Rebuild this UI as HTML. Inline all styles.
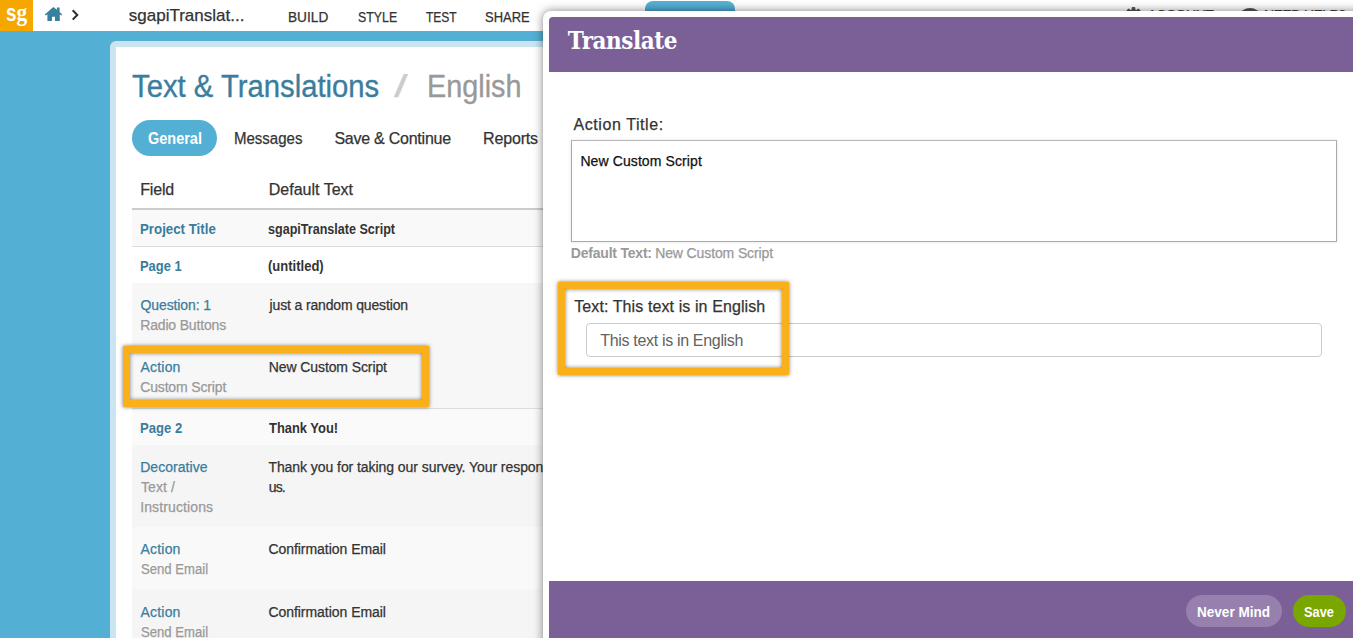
<!DOCTYPE html>
<html lang="en">
<head>
<meta charset="utf-8">
<title>Text &amp; Translations</title>
<style>
*{box-sizing:border-box;margin:0;padding:0}
html,body{width:1353px;height:638px;overflow:hidden}
body{background:#53b0d4;font-family:"Liberation Sans",sans-serif;color:#333;position:relative}
.t{position:absolute;white-space:nowrap;line-height:20px;font-size:14px;-webkit-text-stroke-width:.25px}
.t.b{-webkit-text-stroke-width:0}
.abs{position:absolute}
/* top bar */
#topbar{position:absolute;left:0;top:0;width:1353px;height:31px;background:#fff}
#logo{position:absolute;left:0;top:0;width:33px;height:31px;background:#f5a700}
#tab{position:absolute;left:645px;top:1px;width:90px;height:30px;border-radius:8px 8px 0 0;background:linear-gradient(#57b4d8,#3f97bb)}
/* panel */
#panel{position:absolute;left:110px;top:41px;width:1300px;height:700px;background:#fff;border:6px solid #c8e5f0;border-radius:6px}
.pill{position:absolute;left:132px;top:120px;width:85px;height:36px;border-radius:18px;background:#53b0d4}
.row{position:absolute;left:132px;width:1200px}
.blue{color:#3a7d9d}
.gray{color:#999}
.b{font-weight:bold}
/* highlight */
.hl{position:absolute;border:7px solid #f9b01b;box-shadow:0 0 4px rgba(0,0,0,.55),inset 0 0 4px rgba(0,0,0,.55)}
/* modal */
#modal{position:absolute;left:543px;top:11px;width:900px;height:700px;background:#fff;border-radius:8px;box-shadow:0 0 10px rgba(0,0,0,.5)}
#mhead{position:absolute;left:549px;top:17px;width:900px;height:55px;background:#7b5f97;border-radius:4px 0 0 0}
#mfoot{position:absolute;left:549px;top:581px;width:900px;height:80px;background:#7b5f97}
#ta{position:absolute;left:571px;top:140px;width:766px;height:102px;border:1px solid #aaa;border-top-color:#b8b8b8;background:#fff;box-shadow:0 0 3px rgba(0,0,0,.12)}
#inp{position:absolute;left:586px;top:323px;width:736px;height:34px;border:1px solid #ccc;border-radius:4px;background:#fff}
.btn{position:absolute;top:595px;height:32px;border-radius:16px}
</style>
</head>
<body>
<div id="topbar"></div>
<div id="logo"></div>
<span class="t b" id="sg" style="left:5.5px;top:0px;font-size:23px;line-height:26px;color:#fff;transform:scaleX(.82);transform-origin:0 0">s<span style="font-family:'Liberation Serif',serif;font-weight:bold;font-size:26px;margin-left:0px">g</span></span>
<svg class="abs" id="home" style="left:40px;top:0" width="45" height="31" viewBox="40 0 45 31"><path d="M53.3 7.1 L44.8 14.4 L45.8 15.6 L47.4 14.3 V21 H52 V16.8 H55 V21 H59.8 V14.3 L61.4 15.6 L62.3 14.4 L59.6 12 V7.6 H56.9 V9.8 Z" fill="#37819e"/><path d="M72.7 10.3 L77.3 14.95 L72.7 19.6" fill="none" stroke="#2e2e2e" stroke-width="2"/></svg>
<span class="t" id="ptitle" style="left:128.8px;top:4.2px;font-size:17px;line-height:24px;letter-spacing:-0.00px">sgapiTranslat...</span>
<span class="t" id="n1" style="left:288.0px;top:7px;transform:scaleX(0.976);transform-origin:0 0">BUILD</span>
<span class="t" id="n2" style="left:357.5px;top:7px;transform:scaleX(0.882);transform-origin:0 0">STYLE</span>
<span class="t" id="n3" style="left:425.9px;top:7px;transform:scaleX(0.857);transform-origin:0 0">TEST</span>
<span class="t" id="n4" style="left:485.0px;top:7px;transform:scaleX(0.925);transform-origin:0 0">SHARE</span>
<div id="tab"></div>
<svg class="abs" id="tricons" style="left:1120px;top:0" width="150" height="31" viewBox="1120 0 150 31"><g fill="#555"><circle cx="1133.5" cy="15.5" r="6.2"/><rect x="1131.7" y="7" width="3.6" height="17" rx="1"/><rect x="1125" y="13.7" width="17" height="3.6" rx="1"/><rect x="1131.7" y="7" width="3.6" height="17" rx="1" transform="rotate(45 1133.5 15.5)"/><rect x="1131.7" y="7" width="3.6" height="17" rx="1" transform="rotate(-45 1133.5 15.5)"/><ellipse cx="1250" cy="16" rx="10" ry="8"/></g><circle cx="1133.5" cy="15.5" r="2.6" fill="#fff"/></svg>
<span class="t" id="acc" style="left:1147.5px;top:4.6px;color:#444;letter-spacing:-0.5px">ACCOUNT</span>
<span class="t" id="help" style="left:1264px;top:4.6px;color:#444;letter-spacing:-0.56px">NEED HELP?</span>

<div id="panel"></div>
<span class="t blue" id="h1a" style="left:132.0px;top:67px;font-size:31px;line-height:40px;-webkit-text-stroke:0.35px #3a7d9d;transform:scaleX(0.944);transform-origin:0 0">Text &amp; Translations</span>
<span class="t" id="h1b" style="left:394px;top:67px;font-size:31px;line-height:40px;color:#ccc;transform:scaleX(1.6);transform-origin:0 0">/</span>
<span class="t" id="h1c" style="left:426.6px;top:67px;font-size:31px;line-height:40px;color:#999;-webkit-text-stroke:0.35px #999;transform:scaleX(0.929);transform-origin:0 0">English</span>
<div class="pill"></div>
<span class="t b" id="s1" style="left:147.5px;top:128.8px;font-size:16px;color:#fff;transform:scaleX(0.905);transform-origin:0 0">General</span>
<span class="t" id="s2" style="left:233.6px;top:128.8px;font-size:16px;transform:scaleX(0.938);transform-origin:0 0">Messages</span>
<span class="t" id="s3" style="left:334.4px;top:128.8px;font-size:16px;letter-spacing:-0.24px">Save &amp; Continue</span>
<span class="t" id="s4" style="left:483.0px;top:128.8px;font-size:16px;letter-spacing:-0.15px">Reports</span>

<span class="t" id="th1" style="left:140.2px;top:180px;font-size:16px;letter-spacing:-0.17px">Field</span>
<span class="t" id="th2" style="left:268.8px;top:180px;font-size:16px;letter-spacing:0.00px">Default Text</span>
<div class="row" style="top:208px;height:2px;background:#ccc"></div>
<div class="row" style="top:210px;height:36px;background:#f9f9f9"></div>
<div class="row" style="top:246px;height:1px;background:#ddd"></div>
<div class="row" style="top:283px;height:62px;background:#f7f7f7"></div>
<div class="row" style="top:345px;height:63px;background:#f7f7f7"></div>
<div class="row" style="top:408px;height:1px;background:#ddd"></div>
<div class="row" style="top:409px;height:36px;background:#fafafa"></div>
<div class="row" style="top:445px;height:82px;background:#f5f5f5"></div>
<div class="row" style="top:527px;height:62px;background:#f9f9f9"></div>
<div class="row" style="top:589px;height:62px;background:#f5f5f5"></div>

<span class="t b blue" id="r1a" style="left:140.0px;top:219px;transform:scaleX(0.949);transform-origin:0 0">Project Title</span>
<span class="t b" id="r1b" style="left:268.4px;top:219px;transform:scaleX(0.897);transform-origin:0 0">sgapiTranslate Script</span>
<span class="t b blue" id="r2a" style="left:139.9px;top:256px;transform:scaleX(0.923);transform-origin:0 0">Page 1</span>
<span class="t b" id="r2b" style="left:268.3px;top:256px;transform:scaleX(0.93);transform-origin:0 0">(untitled)</span>
<span class="t blue" id="r3a" style="left:140.6px;top:295px;letter-spacing:-0.12px">Question: 1</span>
<span class="t gray" id="r3c" style="left:140.2px;top:315px;letter-spacing:-0.16px">Radio Buttons</span>
<span class="t" id="r3b" style="left:269.6px;top:295px;letter-spacing:-0.15px">just a random question</span>
<span class="t blue" id="r4a" style="left:140.5px;top:357px;letter-spacing:0.2px">Action</span>
<span class="t gray" id="r4c" style="left:140.2px;top:377px;letter-spacing:-0.15px">Custom Script</span>
<span class="t" id="r4b" style="left:268.8px;top:357px;letter-spacing:-0.10px">New Custom Script</span>
<span class="t b blue" id="r5a" style="left:139.9px;top:418px;transform:scaleX(0.934);transform-origin:0 0">Page 2</span>
<span class="t b" id="r5b" style="left:268.9px;top:418px;transform:scaleX(0.922);transform-origin:0 0">Thank You!</span>
<span class="t blue" id="r6a" style="left:140.2px;top:457px;letter-spacing:0.05px">Decorative</span>
<span class="t gray" id="r6c" style="left:141.0px;top:477px;letter-spacing:0.08px">Text /</span>
<span class="t gray" id="r6d" style="left:140.2px;top:497px;letter-spacing:0.12px">Instructions</span>
<span class="t" id="r6b" style="left:268.4px;top:457px;letter-spacing:-0.06px">Thank you for taking our survey. Your response is very important to</span>
<span class="t" id="r6e" style="left:268.8px;top:477px;letter-spacing:-0.90px">us.</span>
<span class="t blue" id="r7a" style="left:140.5px;top:539px;letter-spacing:0.2px">Action</span>
<span class="t gray" id="r7c" style="left:140.5px;top:559px;transform:scaleX(0.937);transform-origin:0 0">Send Email</span>
<span class="t" id="r7b" style="left:268.4px;top:539px;letter-spacing:-0.04px">Confirmation Email</span>
<span class="t blue" id="r8a" style="left:140.5px;top:602px;letter-spacing:0.2px">Action</span>
<span class="t gray" id="r8c" style="left:140.5px;top:622px;transform:scaleX(0.937);transform-origin:0 0">Send Email</span>
<span class="t" id="r8b" style="left:268.4px;top:602px;letter-spacing:-0.04px">Confirmation Email</span>
<div class="hl" style="left:123px;top:346px;width:306px;height:61px"></div>

<div id="modal"></div>
<div id="mhead"></div>
<span class="t b" id="mt" style="left:567.8px;top:24.7px;font-size:24px;line-height:32px;color:#fff;font-family:'DejaVu Serif Condensed','DejaVu Serif',serif;letter-spacing:-0.46px">Translate</span>
<span class="t" id="l1" style="left:573.5px;top:114.5px;font-size:16px;letter-spacing:0.58px">Action Title:</span>
<div id="ta"></div>
<span class="t" id="tav" style="left:580.4px;top:151px;color:#111;letter-spacing:0.10px">New Custom Script</span>
<span class="t b gray" id="d1" style="left:570.8px;top:243px;letter-spacing:-0.21px">Default Text:</span>
<span class="t gray" id="d2" style="left:655.2px;top:243px;letter-spacing:-0.12px">New Custom Script</span>
<span class="t" id="l2" style="left:574.2px;top:296.7px;font-size:16px;letter-spacing:0.10px">Text: This text is in English</span>
<div id="inp"></div>
<span class="t" id="iv" style="-webkit-text-stroke-width:0;left:600.2px;top:330.7px;font-size:16px;color:#626262;letter-spacing:-0.32px">This text is in English</span>
<div class="hl" style="left:558px;top:282px;width:231px;height:93px"></div>
<div id="mfoot"></div>
<div class="btn" style="left:1186px;width:96px;background:#9780ae"></div>
<div class="btn" style="left:1293px;width:53px;background:#7aa600"></div>
<span class="t b" id="b1" style="left:1197.1px;top:601.7px;color:#fff;font-size:14.5px;transform:scaleX(0.935);transform-origin:0 0">Never Mind</span>
<span class="t b" id="b2" style="left:1304.1px;top:601.7px;color:#fff;font-size:14.5px;transform:scaleX(0.882);transform-origin:0 0">Save</span>
</body>
</html>
